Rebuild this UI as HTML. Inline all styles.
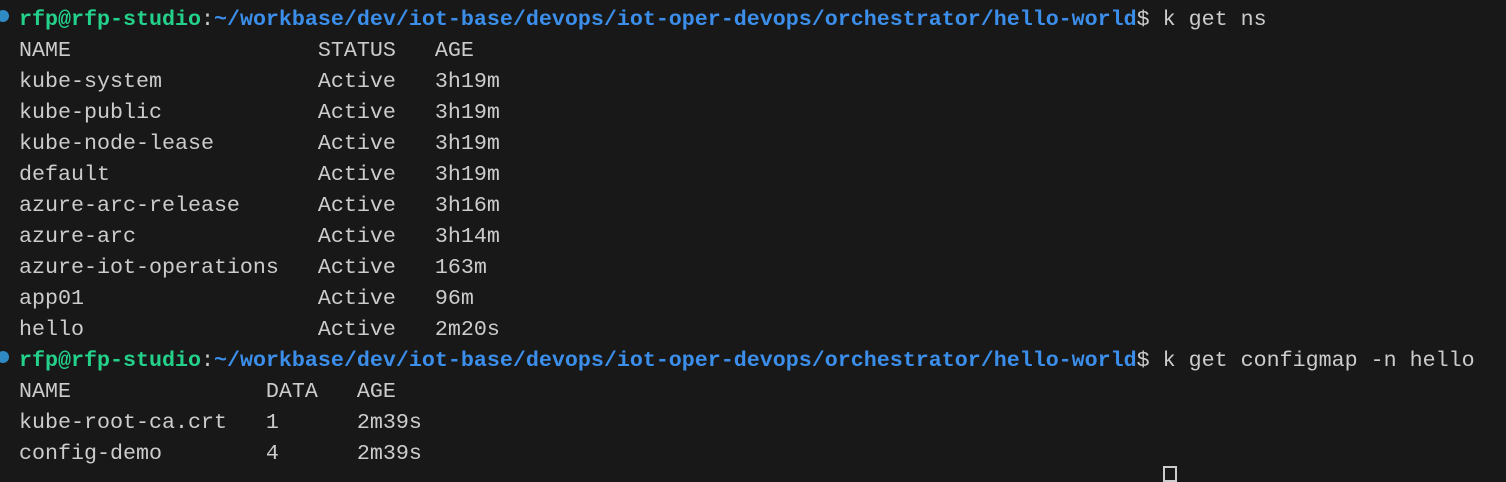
<!DOCTYPE html>
<html><head><style>
html,body{margin:0;padding:0;background:#181818;width:1506px;height:472px;overflow:hidden}
pre{margin:0;position:absolute;left:19px;top:4px;font-family:"Liberation Mono",monospace;font-size:21.67px;line-height:31px;color:#cccccc}
.g{color:#23d18b;font-weight:bold}.b{color:#3b8eea;font-weight:bold}
.dot{position:absolute;left:-3px;width:12px;height:12px;border-radius:50%;background:#2f8ac4}
.cur{position:absolute;left:1163px;top:466px;width:10px;height:12px;border:2px solid #cccccc}
</style></head><body>
<div class="dot" style="top:10px"></div>
<div class="dot" style="top:351px"></div>
<pre><span class="g">rfp@rfp-studio</span>:<span class="b">~/workbase/dev/iot-base/devops/iot-oper-devops/orchestrator/hello-world</span>$ k get ns
NAME                   STATUS   AGE
kube-system            Active   3h19m
kube-public            Active   3h19m
kube-node-lease        Active   3h19m
default                Active   3h19m
azure-arc-release      Active   3h16m
azure-arc              Active   3h14m
azure-iot-operations   Active   163m
app01                  Active   96m
hello                  Active   2m20s
<span class="g">rfp@rfp-studio</span>:<span class="b">~/workbase/dev/iot-base/devops/iot-oper-devops/orchestrator/hello-world</span>$ k get configmap -n hello
NAME               DATA   AGE
kube-root-ca.crt   1      2m39s
config-demo        4      2m39s</pre>
<div class="cur"></div>
</body></html>
